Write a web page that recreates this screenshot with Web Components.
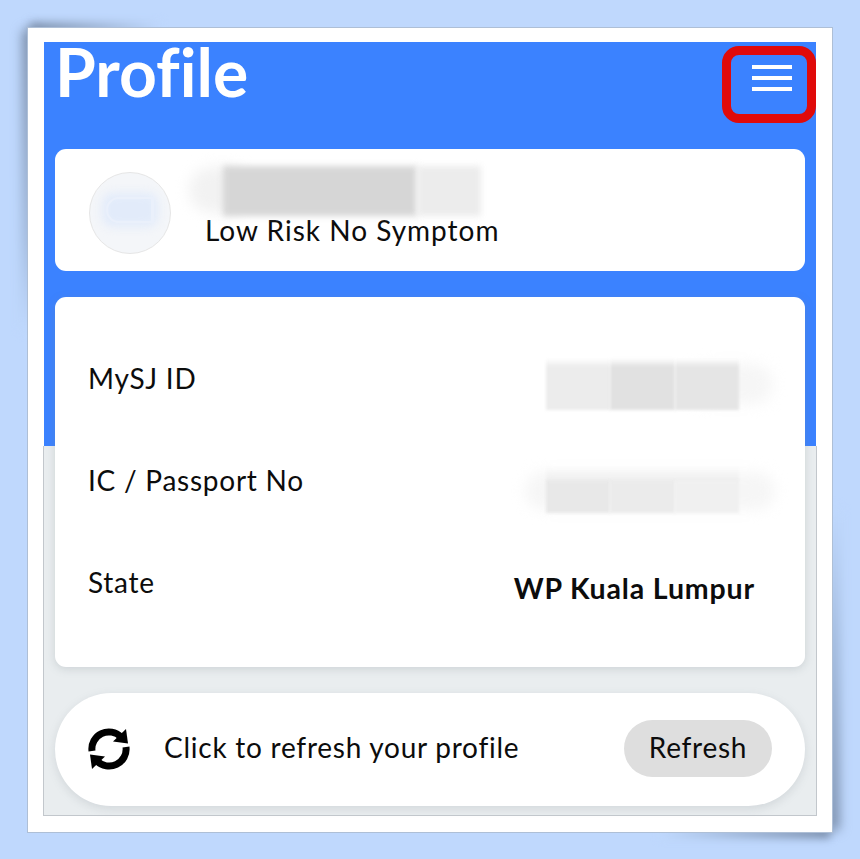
<!DOCTYPE html>
<html>
<head>
<meta charset="utf-8">
<style>
html,body{margin:0;padding:0;}
body{
  width: 860px;
  height: 859px;
  overflow: hidden;
  background: #bfd8fd;
  font-family: "Lato", "Liberation Sans", sans-serif;
  font-variant-ligatures: none;
  color: #0c0c0c;
}
</style>
</head>
<body>
<profile-frame>
  <profile-header title-text="Profile"></profile-header>
  <user-card status="Low Risk No Symptom"></user-card>
  <info-card>
    <info-row label="MySJ ID" blur="a"></info-row>
    <info-row label="IC / Passport No" blur="b"></info-row>
    <info-row label="State" value="WP Kuala Lumpur"></info-row>
  </info-card>
  <refresh-bar text="Click to refresh your profile" action="Refresh"></refresh-bar>
</profile-frame>

<script>
const frame_template = document.createElement('template');
frame_template.innerHTML = `
<style>
:host{
  display: block;
  position: relative;
  box-sizing: border-box;
  width: 804px;
  height: 804px;
  margin: 28px 0 0 28px;
  padding: 14px 16px 17px 16px;
  background: #fff;
  box-shadow: 0 0 0 1px #aebfd6;
}
#shadow-a, #shadow-b{
  position: absolute;
  z-index: -1;
  filter: blur(6px);
}
#shadow-a{
  left: -5px;
  top: 2px;
  width: 12px;
  height: 300px;
  background: linear-gradient(#72849e, #9db5d6 70%, #bfd8fd);
}
#shadow-c{
  position: absolute;
  z-index: -1;
  filter: blur(5px);
  left: 2px;
  top: -5px;
  width: 130px;
  height: 10px;
  background: linear-gradient(90deg, #72849e, #bfd8fd);
}
#shadow-b{
  right: -7px;
  bottom: 2px;
  width: 12px;
  height: 320px;
  background: linear-gradient(#bfd8fd, #9db5d6 40%, #7487a3);
}
#shadow-d{
  position: absolute;
  z-index: -1;
  filter: blur(4px);
  right: 2px;
  bottom: -6px;
  width: 170px;
  height: 10px;
  background: linear-gradient(90deg, #bfd8fd, #7487a3);
}
#inner{
  box-sizing: border-box;
  height: 100%;
  padding: 0 11px;
  background: linear-gradient(#3b82ff 404px, #e9edef 404px);
  display: flex;
  flex-direction: column;
  position: relative;
}
#inner::after{
  content: "";
  position: absolute;
  left: -1px;
  right: -1px;
  top: 404px;
  bottom: -1px;
  border: 1px solid #c2c7cc;
  border-top: 0;
  pointer-events: none;
}
</style>
<div id="shadow-a"></div><div id="shadow-c"></div><div id="shadow-b"></div><div id="shadow-d"></div>
<div id="inner"><slot></slot></div>`;

class profileFrame extends HTMLElement{
  constructor(){
    super();
    this.attachShadow({mode:"open"});
    this.shadowRoot.appendChild(frame_template.content.cloneNode(true));
  }
}

const header_template = document.createElement('template');
header_template.innerHTML = `
<style>
:host{
  display: flex;
  justify-content: space-between;
  align-items: flex-start;
  height: 107px;
  margin-right: -11px;
}
h1{
  margin: -10px 0 0 0;
  font-size: 66px;
  line-height: 80px;
  font-weight: 700;
  color: #fff;
}
#menu{
  box-sizing: border-box;
  width: 94px;
  height: 77px;
  margin-top: 4px;
  border: 9px solid #e00a0a;
  border-radius: 17px;
  display: flex;
  flex-direction: column;
  align-items: center;
  gap: 7px;
  padding: 10px 0 0 6px;
}
#menu span{
  display: block;
  width: 40px;
  height: 4px;
  background: #fff;
}
</style>
<h1 id="title"></h1>
<div id="menu"><span></span><span></span><span></span></div>`;

class profileHeader extends HTMLElement{
  constructor(){
    super();
    this.attachShadow({mode:"open"});
    this.shadowRoot.appendChild(header_template.content.cloneNode(true));
    this.shadowRoot.getElementById("title").innerText = this.getAttribute("title-text");
  }
}

const user_template = document.createElement('template');
user_template.innerHTML = `
<style>
:host{
  display: flex;
  align-items: center;
  position: relative;
  box-sizing: border-box;
  height: 122px;
  padding-left: 34px;
  background: #fff;
  border-radius: 11px;
}
#avatar{
  box-sizing: border-box;
  width: 82px;
  height: 82px;
  margin-top: 6px;
  border-radius: 50%;
  border: 1.5px solid #e6e6e6;
  background: #f4f6f9;
  overflow: hidden;
  position: relative;
  flex: none;
}
#avatar i{
  position: absolute;
  left: 12px;
  top: 20px;
  width: 56px;
  height: 34px;
  border-radius: 10px;
  background: #e2ebfa;
  filter: blur(5px);
}
#avatar b{
  position: absolute;
  left: 16px;
  top: 24px;
  width: 48px;
  height: 26px;
  box-sizing: border-box;
  border: 2px solid #eaf0fb;
  border-right-width: 3px;
  border-radius: 13px 0 0 13px;
  filter: blur(.5px);
}
#status{
  margin: 40px 0 0 34px;
  font-size: 28px;
  line-height: 34px;
  letter-spacing: 1px;
}
.blur{
  position: absolute;
  top: 17px;
  height: 50px;
  filter: blur(3px);
}
#b1{left: 134px; width: 50px; height: 46px; top: 18px; background: #f2f2f2; border-radius: 24px 0 0 24px; filter: blur(7px);}
#b2{left: 168px; width: 194px; background: #d6d6d6;}
#b3{left: 362px; width: 64px; background: #ececec;}
</style>
<div id="avatar"><i></i><b></b></div>
<div class="blur" id="b1"></div>
<div class="blur" id="b2"></div>
<div class="blur" id="b3"></div>
<div id="status"></div>`;

class userCard extends HTMLElement{
  constructor(){
    super();
    this.attachShadow({mode:"open"});
    this.shadowRoot.appendChild(user_template.content.cloneNode(true));
    this.shadowRoot.getElementById("status").innerText = this.getAttribute("status");
  }
}

const info_template = document.createElement('template');
info_template.innerHTML = `
<style>
:host{
  display: block;
  box-sizing: border-box;
  height: 370px;
  margin-top: 26px;
  padding: 30px 34px;
  background: #fff;
  border-radius: 11px;
  box-shadow: 0 2px 8px rgba(120,130,140,.25);
}
</style>
<slot></slot>`;

class infoCard extends HTMLElement{
  constructor(){
    super();
    this.attachShadow({mode:"open"});
    this.shadowRoot.appendChild(info_template.content.cloneNode(true));
  }
}

const row_template = document.createElement('template');
row_template.innerHTML = `
<style>
:host{
  display: flex;
  justify-content: space-between;
  align-items: center;
  position: relative;
  height: 102px;
  font-size: 28px;
  letter-spacing: 0.75px;
}
#label{
  margin: 0 0 1px -1px;
}
#value{
  margin: 12px 16px 0 0;
  font-weight: 700;
  font-size: 28.5px;
  letter-spacing: 0.85px;
}
.blur{
  position: absolute;
  display: none;
}
.soft{
  filter: blur(7px);
  background: #f6f6f6;
  border-radius: 20px;
}
.hard{
  filter: blur(1.5px);
}
:host([blur="a"]) .blur, :host([blur="b"]) .blur{display: block;}
:host([blur="a"]) #s0{left: 600px; width: 84px; top: 37px; height: 40px;}
:host([blur="a"]) #h1{left: 457px; width: 64px; top: 31px; height: 52px; background: linear-gradient(#fff, #ececec 9px);}
:host([blur="a"]) #h2{left: 521px; width: 65px; top: 31px; height: 52px; background: linear-gradient(#fff, #e1e1e1 9px);}
:host([blur="a"]) #h3{left: 586px; width: 64px; top: 31px; height: 52px; background: linear-gradient(#fff, #e5e5e5 9px);}
:host([blur="b"]) #s0{left: 436px; width: 250px; top: 43px; height: 38px;}
:host([blur="b"]) #h1{left: 457px; width: 64px; top: 34px; height: 50px; background: linear-gradient(rgba(0,0,0,0) 2px, rgba(0,0,0,.03) 17px, #e8e8e8 18px);}
:host([blur="b"]) #h2{left: 521px; width: 65px; top: 34px; height: 50px; background: linear-gradient(rgba(0,0,0,0) 2px, rgba(0,0,0,.03) 17px, #ebebeb 18px);}
:host([blur="b"]) #h3{left: 586px; width: 64px; top: 34px; height: 50px; background: linear-gradient(rgba(0,0,0,0) 2px, rgba(0,0,0,.03) 17px, #f0f0f0 18px);}
</style>
<span id="label"></span>
<span id="value"></span>
<div class="blur soft" id="s0"></div>
<div class="blur hard" id="h1"></div>
<div class="blur hard" id="h2"></div>
<div class="blur hard" id="h3"></div>`;

class infoRow extends HTMLElement{
  constructor(){
    super();
    this.attachShadow({mode:"open"});
    this.shadowRoot.appendChild(row_template.content.cloneNode(true));
    this.shadowRoot.getElementById("label").innerText = this.getAttribute("label");
    this.shadowRoot.getElementById("value").innerText = this.getAttribute("value") || "";
  }
}

const refresh_template = document.createElement('template');
refresh_template.innerHTML = `
<style>
:host{
  display: flex;
  align-items: center;
  box-sizing: border-box;
  height: 113px;
  margin-top: 26px;
  padding: 0 33px;
  background: #fff;
  border-radius: 57px;
  box-shadow: 0 3px 10px rgba(120,130,140,.2);
  font-size: 28px;
  letter-spacing: 0.75px;
}
svg{
  width: 42px;
  height: 42px;
  flex: none;
  margin-bottom: 2px;
}
#text{
  flex: 1;
  margin: 0 0 5px 34px;
}
button{
  width: 148px;
  height: 57px;
  margin-bottom: 2px;
  border: 0;
  padding: 0 0 3px 0;
  border-radius: 29px;
  background: #dedede;
  font: inherit;
  letter-spacing: inherit;
  color: inherit;
}
</style>
<svg viewBox="0 0 42 42">
  <g>
    <path d="M4 23 A17 17 0 0 1 33 9" fill="none" stroke="#000" stroke-width="7"/>
    <polygon points="38,1 40,15.5 25,13.5" fill="#000"/>
  </g>
  <g transform="rotate(180 21 21)">
    <path d="M4 23 A17 17 0 0 1 33 9" fill="none" stroke="#000" stroke-width="7"/>
    <polygon points="38,1 40,15.5 25,13.5" fill="#000"/>
  </g>
</svg>
<span id="text"></span>
<button type="button" id="action"></button>`;

class refreshBar extends HTMLElement{
  constructor(){
    super();
    this.attachShadow({mode:"open"});
    this.shadowRoot.appendChild(refresh_template.content.cloneNode(true));
    this.shadowRoot.getElementById("text").innerText = this.getAttribute("text");
    this.shadowRoot.getElementById("action").innerText = this.getAttribute("action");
  }
}

customElements.define("profile-frame", profileFrame);
customElements.define("profile-header", profileHeader);
customElements.define("user-card", userCard);
customElements.define("info-card", infoCard);
customElements.define("info-row", infoRow);
customElements.define("refresh-bar", refreshBar);
</script>
</body>
</html>
